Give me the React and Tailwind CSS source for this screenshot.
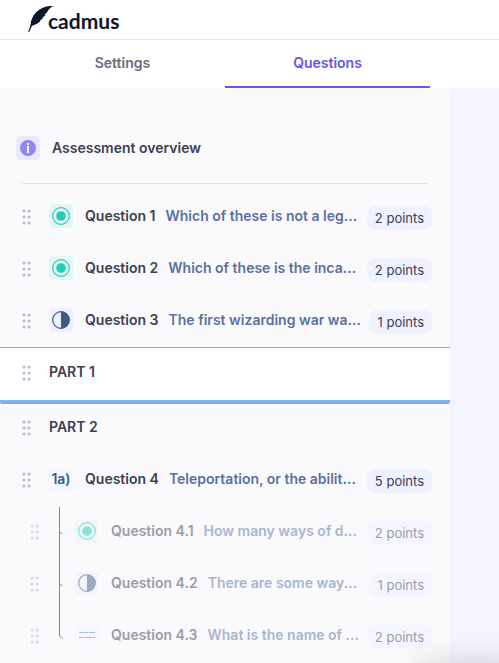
import { clsx } from 'clsx'

const QUESTIONS = [
  { id: '1', type: 'choice', prompt: 'Which of these is not a leg...', points: 2 },
  { id: '2', type: 'choice', prompt: 'Which of these is the inca...', points: 2 },
  { id: '3', type: 'truefalse', prompt: 'The first wizarding war wa...', points: 1 },
]
const SUB_QUESTIONS = [
  { id: '4.1', type: 'choice', prompt: 'How many ways of d...', points: 2 },
  { id: '4.2', type: 'truefalse', prompt: 'There are some way...', points: 1 },
  { id: '4.3', type: 'blanks', prompt: 'What is the name of ...', points: 2 },
]

const ICON_TONE = {
  choice: 'bg-[#e6f6f4]',
  truefalse: 'bg-[#eef0ff]',
  blanks: 'bg-[#f5f8ff]',
  multipart: 'bg-[#f6f7fc]',
}

function Logo() {
  return (
    <a href="#" aria-label="cadmus" className="flex items-center text-[#10152e]">
      <svg viewBox="0 0 26 28" className="h-7 w-[26px] shrink-0" fill="currentColor" aria-hidden="true">
        <path d="M25.500 0C19.500 -.5 13.500 1.500 9 5.500C5 9 3 13.500 2.600 18C2 21 1.200 23.500 0 25.500L1 26C2 24.500 2.800 22.500 3.800 20C7 18.800 10 17.500 12.500 15L12 14.500L14.800 12.500L14.500 11.800L17.300 9.200L17 8.300L19.200 6C20.500 3.500 22.500 1 25.500 0Z" />
      </svg>
      <span className="-ml-1.5 pt-0.5 font-[Lato,sans-serif] text-[21px] leading-6 font-bold">cadmus</span>
    </a>
  )
}

function Handle({ label }) {
  return (
    <button aria-label={`Move ${label}`} className="mt-0.5 shrink-0 text-[#b5bdd0]">
      <svg viewBox="0 0 9 16" className="h-4 w-[9px]" fill="currentColor">
        {[2, 8, 14].map((y) => (
          <g key={y}>
            <circle cx="2" cy={y} r="1.6" />
            <circle cx="7" cy={y} r="1.6" />
          </g>
        ))}
      </svg>
    </button>
  )
}

function TypeIcon({ type }) {
  return (
    <span className={clsx('flex size-6 shrink-0 items-center justify-center rounded-sm', ICON_TONE[type])}>
      {type === 'choice' && (
        <svg viewBox="0 0 18 18" className="size-[18px]">
          <circle cx="9" cy="9" r="8.300" fill="none" stroke="#20cdb5" strokeWidth="1.200" />
          <circle cx="9" cy="9" r="4.800" fill="#20cdb5" />
        </svg>
      )}
      {type === 'truefalse' && (
        <svg viewBox="0 0 18 18" className="size-[18px]">
          <circle cx="9" cy="9" r="8.300" fill="none" stroke="#3f5a86" strokeWidth="1.200" />
          <path d="M9 .5a8.500 8.500 0 0 1 0 17z" fill="#3f5a86" />
        </svg>
      )}
      {type === 'blanks' && (
        <svg viewBox="0 0 16 8" className="h-2 w-4" stroke="#3b8bf5">
          <path d="M0 1.500h9M10 1.500h6M0 6.500h5M6 6.500h10" />
        </svg>
      )}
      {type === 'multipart' && <span className="text-sm leading-5 font-semibold text-[#3f5a86]">1a)</span>}
    </span>
  )
}

function QuestionRow({ question, nested }) {
  const { id, type, prompt, points } = question
  return (
    <li className={clsx('flex h-[52px] items-center pr-[18px]', nested ? 'pl-[30px] opacity-50' : 'pl-[22px]')}>
      <Handle label={`Question ${id}`} />
      <div className={clsx('flex min-w-0 flex-1 items-center gap-3', nested ? 'ml-9' : 'ml-[18px]')}>
        <TypeIcon type={type} />
        <a href={`#question-${id}`} className="flex min-w-0 flex-1 gap-2.5 text-sm leading-5 font-semibold whitespace-nowrap">
          <span>Question {id}</span>
          <span className="text-[#5b70a0]">{prompt}</span>
        </a>
      </div>
      <span className="mt-1 shrink-0 rounded-lg bg-[#f0f1ff] px-2 py-0.5 text-[13px] leading-5">{points} points</span>
    </li>
  )
}

export default function App() {
  return (
    <div className="flex min-h-screen flex-col overflow-hidden bg-white font-[Inter,sans-serif] text-[#3c4051]">
      <header className="flex h-10 items-center border-b border-[#e6e6ef] pl-7">
        <Logo />
      </header>
      <nav className="mr-[49px] flex h-12 px-5 text-sm font-semibold">
        <a href="#settings" className="flex flex-1 items-center justify-center border-b-2 border-transparent text-[#696c7c]">Settings</a>
        <a href="#questions" aria-current="page" className="flex flex-1 items-center justify-center border-b-2 border-[#6554f0] text-[#6554f0]">Questions</a>
      </nav>

      <div className="flex flex-1 bg-[#f5f5ff]">
        <main className="mr-[49px] min-w-0 flex-1 bg-[#fafafd] pt-12">
          <a href="#overview" className="mx-4 flex items-center gap-3 text-sm leading-5 font-semibold">
            <span className="flex size-6 items-center justify-center rounded-sm bg-[#e9e9fd]">
              <svg viewBox="0 0 16 16" className="size-4">
                <circle cx="8" cy="8" r="8" fill="#9386f5" />
                <path d="M7 3h2v2H7zM7 6h2v7H7z" fill="#fff" />
              </svg>
            </span>
            Assessment overview
          </a>
          <hr className="mx-[22px] mt-[23px] mb-1.5 border-[#e3e4ef]" />

          <ul>
            {QUESTIONS.map((q) => (
              <QuestionRow key={q.id} question={q} />
            ))}
          </ul>

          {/* part being dragged */}
          <section className="mt-px rounded-b-xs border-t border-b-2 border-t-[#8ea9dc] border-b-[#86a9e2] bg-white">
            <div className="flex h-[54px] items-center gap-[18px] border-b-2 border-[#80b8ea] pb-1 pl-[22px]">
              <Handle label="Part 1" />
              <h2 className="text-sm leading-5 font-semibold">PART 1</h2>
            </div>
          </section>

          <section>
            <div className="mb-[3px] flex h-[46px] items-center gap-[18px] pl-[22px]">
              <Handle label="Part 2" />
              <h2 className="text-sm leading-5 font-semibold">PART 2</h2>
            </div>
            <ul>
              <QuestionRow question={{ id: '4', type: 'multipart', prompt: 'Teleportation, or the abilit...', points: 5 }} />
            </ul>
            <div className="relative">
              <svg viewBox="0 0 5 132" className="absolute top-0.5 left-[59px] h-33 w-[5px]" fill="none" stroke="#85868f">
                <path d="M.5 0v129l3 2.500M.5 25l3 2M.5 77l3 2" />
              </svg>
              <ul>
                {SUB_QUESTIONS.map((q) => (
                  <QuestionRow key={q.id} question={q} nested />
                ))}
              </ul>
            </div>
          </section>
        </main>
      </div>
      {/* shadow of the help panel docked under the fold */}
      <div className="pointer-events-none fixed top-full -right-8 left-[420px] h-16 rounded-l-lg shadow-[0_0_32px_rgba(0,0,0,0.16)]" />
    </div>
  )
}
